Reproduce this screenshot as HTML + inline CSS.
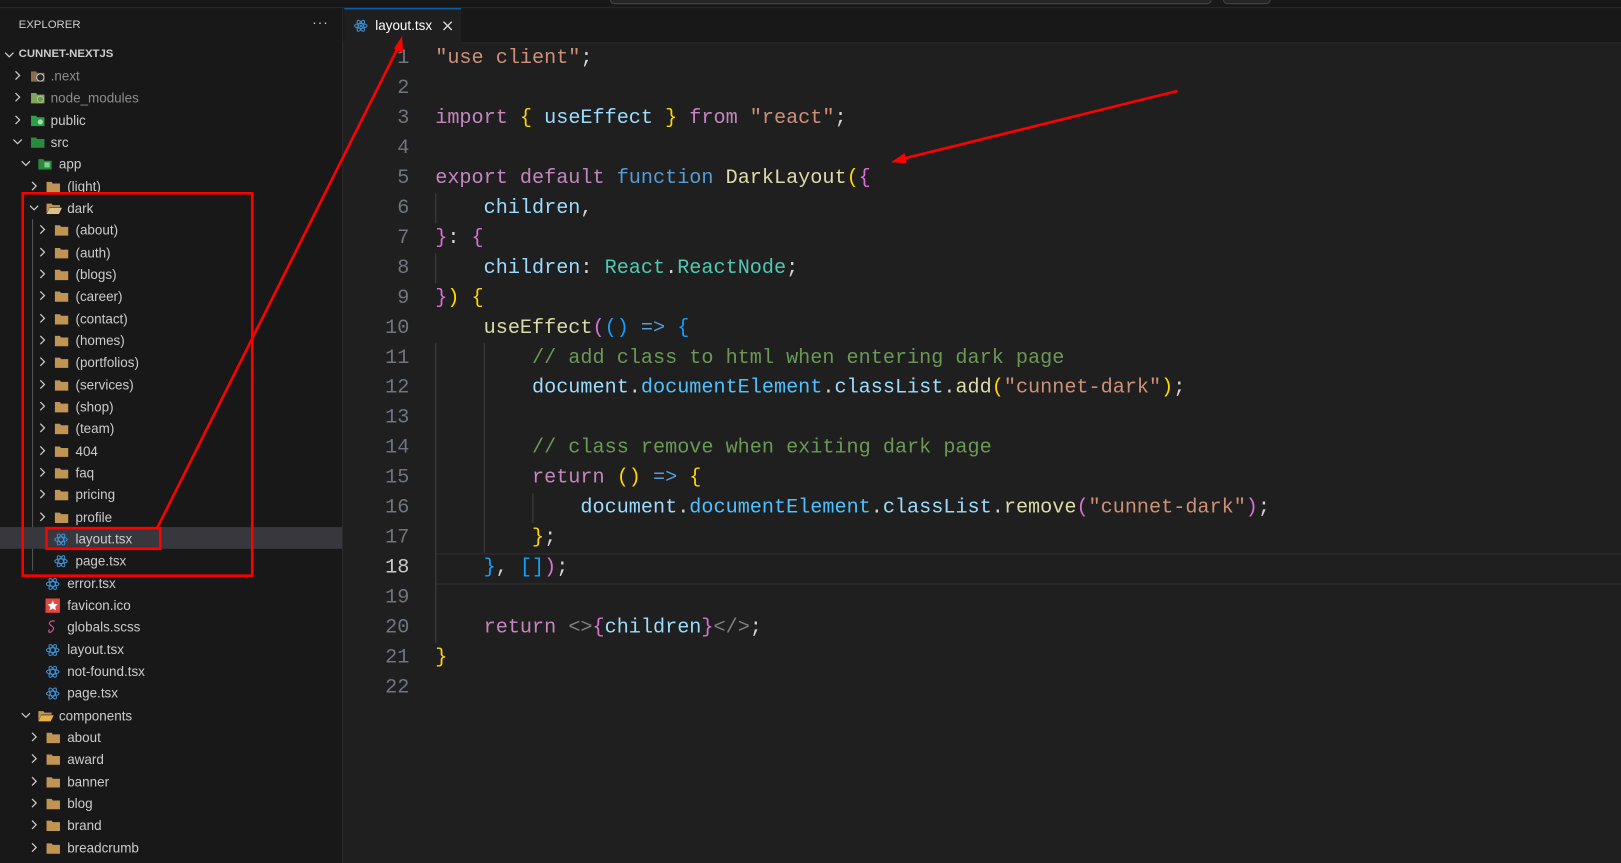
<!DOCTYPE html>
<html><head><meta charset="utf-8"><style>
html,body{margin:0;padding:0;background:#1f1f1f;overflow:hidden;width:1621px;height:863px}
#w{position:absolute;left:0;top:0;width:1568px;height:835px;transform:scale(1.03380,1.03353);transform-origin:0 0;font-family:"Liberation Sans",sans-serif;background:#1f1f1f}
#top{position:absolute;left:0;top:0;width:1568px;height:7px;background:#181818;border-bottom:1px solid #2b2b2b}
#sb{position:absolute;left:0;top:8px;width:331px;height:827px;background:#181818;border-right:1px solid #2b2b2b}
.r{position:absolute;left:0;width:331px;height:21px;line-height:21px;font-size:13px;color:#cccccc;white-space:nowrap}
.r svg{position:absolute}
.t{position:absolute;top:0}
.dim{color:#8c8c8c}
#tabs{position:absolute;left:332px;top:8px;width:1236px;height:33px;background:#181818;border-bottom:1px solid #2b2b2b}
#tab{position:absolute;left:333px;top:8px;width:113px;height:34px;background:#1f1f1f;border-top:1px solid #0078d4;box-sizing:border-box}
#code{position:absolute;left:332px;top:42px;width:1236px}
.l{position:absolute;left:0;width:1236px;height:29px;line-height:29px;font-family:"Liberation Mono",monospace;font-size:19.5px;white-space:pre}
.n{position:absolute;right:1172px;color:#6e7681;text-align:right}
.c{position:absolute;left:89px;color:#d4d4d4}
.s{color:#ce9178}.k{color:#c586c0}.b{color:#569cd6}.f{color:#dcdcaa}.v{color:#9cdcfe}.ty{color:#4ec9b0}.cm{color:#6a9955}.g{color:#ffd700}.p{color:#da70d6}.bl{color:#179fff}.cn{color:#4fc1ff}.gr{color:#808080}
.guide{position:absolute;width:1px;background:#404040}
</style></head><body><div id="w">
<div id="top"></div>
<div style="position:absolute;left:590px;top:-4px;width:580px;height:6px;border:1px solid #454545;border-radius:4px;background:#252525"></div>
<div style="position:absolute;left:1183px;top:-4px;width:44px;height:6px;border:1px solid #454545;border-radius:4px;background:#252525"></div>
<div id="sb"></div>
<div style="position:absolute;left:18px;top:18px;font-size:11px;color:#cccccc">EXPLORER</div>
<div style="position:absolute;left:302px;top:14px;font-size:13px;color:#cccccc;letter-spacing:1px">···</div>
<div class="r" style="top:41.5px;font-weight:bold;font-size:11px">
<svg style="left:4px;top:6px" width="10" height="10" viewBox="0 0 10 10"><path d="M1 3l4 4 4-4" stroke="#ccc" fill="none" stroke-width="1.2"/></svg>
<span class="t" style="left:18px">CUNNET-NEXTJS</span></div>

<!-- tree rows -->
<div id="tree">
<!-- generated rows -->
<div class="r" style="top:63px"><svg style="left:12px;top:5px" width="10" height="10" viewBox="0 0 10 10"><path d="M3 1l4 4-4 4" stroke="#ccc" fill="none" stroke-width="1.2"/></svg><svg style="left:30px;top:4px" width="15" height="13" viewBox="0 0 15 13"><path d="M0 2h5l1 1.5h7v8.5H0z" fill="#8a6d4a"/><circle cx="9" cy="8" r="3.5" fill="#222" stroke="#ddd" stroke-width=".8"/></svg><span class="t dim" style="left:49px">.next</span></div>
<div class="r" style="top:84.3px"><svg style="left:12px;top:5px" width="10" height="10" viewBox="0 0 10 10"><path d="M3 1l4 4-4 4" stroke="#ccc" fill="none" stroke-width="1.2"/></svg><svg style="left:30px;top:4px" width="15" height="13" viewBox="0 0 15 13"><path d="M0 2h5l1 1.5h7v8.5H0z" fill="#7ea65a"/><circle cx="9" cy="8" r="3" fill="#6d9a4a" stroke="#ccc" stroke-width=".6"/></svg><span class="t dim" style="left:49px">node_modules</span></div>
<div class="r" style="top:105.7px"><svg style="left:12px;top:5px" width="10" height="10" viewBox="0 0 10 10"><path d="M3 1l4 4-4 4" stroke="#ccc" fill="none" stroke-width="1.2"/></svg><svg style="left:30px;top:4px" width="15" height="13" viewBox="0 0 15 13"><path d="M0 2h5l1 1.5h7v8.5H0z" fill="#2e9e4a"/><circle cx="9" cy="8" r="2.5" fill="#9ee0a8"/></svg><span class="t" style="left:49px">public</span></div>
<div class="r" style="top:127px"><svg style="left:12px;top:5px" width="10" height="10" viewBox="0 0 10 10"><path d="M1 3l4 4 4-4" stroke="#ccc" fill="none" stroke-width="1.2"/></svg><svg style="left:30px;top:4px" width="15" height="13" viewBox="0 0 15 13"><path d="M0 2h5l1 1.5h7v8.5H0z" fill="#2a8a3e"/></svg><span class="t" style="left:49px">src</span></div>
<div class="r" style="top:148.3px"><svg style="left:20px;top:5px" width="10" height="10" viewBox="0 0 10 10"><path d="M1 3l4 4 4-4" stroke="#ccc" fill="none" stroke-width="1.2"/></svg><svg style="left:37px;top:4px" width="15" height="13" viewBox="0 0 15 13"><path d="M0 2h5l1 1.5h7v8.5H0z" fill="#2a8a3e"/><rect x="6" y="5" width="5" height="5" fill="#7fd08f"/></svg><span class="t" style="left:57px">app</span></div>
<div class="r" style="top:169.7px"><svg style="left:28px;top:5px" width="10" height="10" viewBox="0 0 10 10"><path d="M3 1l4 4-4 4" stroke="#ccc" fill="none" stroke-width="1.2"/></svg><svg style="left:45px;top:4px" width="15" height="13" viewBox="0 0 15 13"><path d="M0 2h5l1 1.5h7v8.5H0z" fill="#c09553"/></svg><span class="t" style="left:65px">(light)</span></div>
<div class="r" style="top:191px"><svg style="left:28px;top:5px" width="10" height="10" viewBox="0 0 10 10"><path d="M1 3l4 4 4-4" stroke="#ccc" fill="none" stroke-width="1.2"/></svg><svg style="left:45px;top:4px" width="15" height="13" viewBox="0 0 15 13"><path d="M0 2h5l1 1.5h7v2H3l-3 6z" fill="#c09553"/><path d="M3 6h12l-3 6H0z" fill="#e0c08a"/></svg><span class="t" style="left:65px">dark</span></div>
</div>
<div id="t3"></div>
<div class="guide" style="left:31px;top:212px;height:340px;background:#555"></div>
<div style="position:absolute;left:0;top:510px;width:331px;height:21px;background:#37373d"></div>
<div id="rows"></div>

<div id="tabs"></div><div id="tab"></div>
<svg style="position:absolute;left:342px;top:18px" width="14" height="14" viewBox="0 0 14 14"><g fill="none" stroke="#3d8fd1" stroke-width="1"><ellipse cx="7" cy="7" rx="6" ry="2.3"/><ellipse cx="7" cy="7" rx="6" ry="2.3" transform="rotate(60 7 7)"/><ellipse cx="7" cy="7" rx="6" ry="2.3" transform="rotate(120 7 7)"/></g><circle cx="7" cy="7" r="1.2" fill="#3d8fd1"/></svg>
<div style="position:absolute;left:363px;top:17px;font-size:13px;color:#ffffff">layout.tsx</div>
<svg style="position:absolute;left:428px;top:20px" width="10" height="10" viewBox="0 0 10 10"><path d="M1 1l8 8M9 1l-8 8" stroke="#ddd" stroke-width="1.3"/></svg>

<div id="code">
<div style="position:absolute;left:89px;top:493px;width:1147px;height:27px;border-top:2px solid #282828;border-bottom:2px solid #282828"></div>
<div class="guide" style="left:89px;top:145px;height:29px"></div>
<div class="guide" style="left:89px;top:203px;height:29px"></div>
<div class="guide" style="left:89px;top:290px;height:290px"></div>
<div class="guide" style="left:136px;top:290px;height:203px"></div>
<div class="guide" style="left:183px;top:435px;height:29px"></div>
<div class="l" style="top:0"><span class="n">1</span><span class="c"><span class="s">"use client"</span>;</span></div>
<div class="l" style="top:29px"><span class="n">2</span></div>
<div class="l" style="top:58px"><span class="n">3</span><span class="c"><span class="k">import</span> <span class="g">{</span> <span class="v">useEffect</span> <span class="g">}</span> <span class="k">from</span> <span class="s">"react"</span>;</span></div>
<div class="l" style="top:87px"><span class="n">4</span></div>
<div class="l" style="top:116px"><span class="n">5</span><span class="c"><span class="k">export</span> <span class="k">default</span> <span class="b">function</span> <span class="f">DarkLayout</span><span class="g">(</span><span class="p">{</span></span></div>
<div class="l" style="top:145px"><span class="n">6</span><span class="c">    <span class="v">children</span>,</span></div>
<div class="l" style="top:174px"><span class="n">7</span><span class="c"><span class="p">}</span>: <span class="p">{</span></span></div>
<div class="l" style="top:203px"><span class="n">8</span><span class="c">    <span class="v">children</span>: <span class="ty">React</span>.<span class="ty">ReactNode</span>;</span></div>
<div class="l" style="top:232px"><span class="n">9</span><span class="c"><span class="p">}</span><span class="g">)</span> <span class="g">{</span></span></div>
<div class="l" style="top:261px"><span class="n">10</span><span class="c">    <span class="f">useEffect</span><span class="p">(</span><span class="bl">()</span> <span class="b">=&gt;</span> <span class="bl">{</span></span></div>
<div class="l" style="top:290px"><span class="n">11</span><span class="c">        <span class="cm">// add class to html when entering dark page</span></span></div>
<div class="l" style="top:319px"><span class="n">12</span><span class="c">        <span class="v">document</span>.<span class="cn">documentElement</span>.<span class="v">classList</span>.<span class="f">add</span><span class="g">(</span><span class="s">"cunnet-dark"</span><span class="g">)</span>;</span></div>
<div class="l" style="top:348px"><span class="n">13</span></div>
<div class="l" style="top:377px"><span class="n">14</span><span class="c">        <span class="cm">// class remove when exiting dark page</span></span></div>
<div class="l" style="top:406px"><span class="n">15</span><span class="c">        <span class="k">return</span> <span class="g">()</span> <span class="b">=&gt;</span> <span class="g">{</span></span></div>
<div class="l" style="top:435px"><span class="n">16</span><span class="c">            <span class="v">document</span>.<span class="cn">documentElement</span>.<span class="v">classList</span>.<span class="f">remove</span><span class="p">(</span><span class="s">"cunnet-dark"</span><span class="p">)</span>;</span></div>
<div class="l" style="top:464px"><span class="n">17</span><span class="c">        <span class="g">}</span>;</span></div>
<div class="l" style="top:493px"><span class="n" style="color:#cccccc">18</span><span class="c">    <span class="bl">}</span>, <span class="bl">[]</span><span class="p">)</span>;</span></div>
<div class="l" style="top:522px"><span class="n">19</span></div>
<div class="l" style="top:551px"><span class="n">20</span><span class="c">    <span class="k">return</span> <span class="gr">&lt;&gt;</span><span class="p">{</span><span class="v">children</span><span class="p">}</span><span class="gr">&lt;/&gt;</span>;</span></div>
<div class="l" style="top:580px"><span class="n">21</span><span class="c"><span class="g">}</span></span></div>
<div class="l" style="top:609px"><span class="n">22</span></div>
</div>

<!-- remaining tree rows -->
<div class="r" style="top:212.3px"><svg style="left:36px;top:5px" width="10" height="10" viewBox="0 0 10 10"><path d="M3 1l4 4-4 4" stroke="#ccc" fill="none" stroke-width="1.2"/></svg><svg style="left:53px;top:4px" width="15" height="13" viewBox="0 0 15 13"><path d="M0 2h5l1 1.5h7v8.5H0z" fill="#c09553"/></svg><span class="t" style="left:73px">(about)</span></div>
<div class="r" style="top:233.7px"><svg style="left:36px;top:5px" width="10" height="10" viewBox="0 0 10 10"><path d="M3 1l4 4-4 4" stroke="#ccc" fill="none" stroke-width="1.2"/></svg><svg style="left:53px;top:4px" width="15" height="13" viewBox="0 0 15 13"><path d="M0 2h5l1 1.5h7v8.5H0z" fill="#c09553"/></svg><span class="t" style="left:73px">(auth)</span></div>
<div class="r" style="top:255px"><svg style="left:36px;top:5px" width="10" height="10" viewBox="0 0 10 10"><path d="M3 1l4 4-4 4" stroke="#ccc" fill="none" stroke-width="1.2"/></svg><svg style="left:53px;top:4px" width="15" height="13" viewBox="0 0 15 13"><path d="M0 2h5l1 1.5h7v8.5H0z" fill="#c09553"/></svg><span class="t" style="left:73px">(blogs)</span></div>
<div class="r" style="top:276.3px"><svg style="left:36px;top:5px" width="10" height="10" viewBox="0 0 10 10"><path d="M3 1l4 4-4 4" stroke="#ccc" fill="none" stroke-width="1.2"/></svg><svg style="left:53px;top:4px" width="15" height="13" viewBox="0 0 15 13"><path d="M0 2h5l1 1.5h7v8.5H0z" fill="#c09553"/></svg><span class="t" style="left:73px">(career)</span></div>
<div class="r" style="top:297.7px"><svg style="left:36px;top:5px" width="10" height="10" viewBox="0 0 10 10"><path d="M3 1l4 4-4 4" stroke="#ccc" fill="none" stroke-width="1.2"/></svg><svg style="left:53px;top:4px" width="15" height="13" viewBox="0 0 15 13"><path d="M0 2h5l1 1.5h7v8.5H0z" fill="#c09553"/></svg><span class="t" style="left:73px">(contact)</span></div>
<div class="r" style="top:319px"><svg style="left:36px;top:5px" width="10" height="10" viewBox="0 0 10 10"><path d="M3 1l4 4-4 4" stroke="#ccc" fill="none" stroke-width="1.2"/></svg><svg style="left:53px;top:4px" width="15" height="13" viewBox="0 0 15 13"><path d="M0 2h5l1 1.5h7v8.5H0z" fill="#c09553"/></svg><span class="t" style="left:73px">(homes)</span></div>
<div class="r" style="top:340.3px"><svg style="left:36px;top:5px" width="10" height="10" viewBox="0 0 10 10"><path d="M3 1l4 4-4 4" stroke="#ccc" fill="none" stroke-width="1.2"/></svg><svg style="left:53px;top:4px" width="15" height="13" viewBox="0 0 15 13"><path d="M0 2h5l1 1.5h7v8.5H0z" fill="#c09553"/></svg><span class="t" style="left:73px">(portfolios)</span></div>
<div class="r" style="top:361.7px"><svg style="left:36px;top:5px" width="10" height="10" viewBox="0 0 10 10"><path d="M3 1l4 4-4 4" stroke="#ccc" fill="none" stroke-width="1.2"/></svg><svg style="left:53px;top:4px" width="15" height="13" viewBox="0 0 15 13"><path d="M0 2h5l1 1.5h7v8.5H0z" fill="#c09553"/></svg><span class="t" style="left:73px">(services)</span></div>
<div class="r" style="top:383px"><svg style="left:36px;top:5px" width="10" height="10" viewBox="0 0 10 10"><path d="M3 1l4 4-4 4" stroke="#ccc" fill="none" stroke-width="1.2"/></svg><svg style="left:53px;top:4px" width="15" height="13" viewBox="0 0 15 13"><path d="M0 2h5l1 1.5h7v8.5H0z" fill="#c09553"/></svg><span class="t" style="left:73px">(shop)</span></div>
<div class="r" style="top:404.3px"><svg style="left:36px;top:5px" width="10" height="10" viewBox="0 0 10 10"><path d="M3 1l4 4-4 4" stroke="#ccc" fill="none" stroke-width="1.2"/></svg><svg style="left:53px;top:4px" width="15" height="13" viewBox="0 0 15 13"><path d="M0 2h5l1 1.5h7v8.5H0z" fill="#c09553"/></svg><span class="t" style="left:73px">(team)</span></div>
<div class="r" style="top:425.7px"><svg style="left:36px;top:5px" width="10" height="10" viewBox="0 0 10 10"><path d="M3 1l4 4-4 4" stroke="#ccc" fill="none" stroke-width="1.2"/></svg><svg style="left:53px;top:4px" width="15" height="13" viewBox="0 0 15 13"><path d="M0 2h5l1 1.5h7v8.5H0z" fill="#c09553"/></svg><span class="t" style="left:73px">404</span></div>
<div class="r" style="top:447px"><svg style="left:36px;top:5px" width="10" height="10" viewBox="0 0 10 10"><path d="M3 1l4 4-4 4" stroke="#ccc" fill="none" stroke-width="1.2"/></svg><svg style="left:53px;top:4px" width="15" height="13" viewBox="0 0 15 13"><path d="M0 2h5l1 1.5h7v8.5H0z" fill="#c09553"/></svg><span class="t" style="left:73px">faq</span></div>
<div class="r" style="top:468.3px"><svg style="left:36px;top:5px" width="10" height="10" viewBox="0 0 10 10"><path d="M3 1l4 4-4 4" stroke="#ccc" fill="none" stroke-width="1.2"/></svg><svg style="left:53px;top:4px" width="15" height="13" viewBox="0 0 15 13"><path d="M0 2h5l1 1.5h7v8.5H0z" fill="#c09553"/></svg><span class="t" style="left:73px">pricing</span></div>
<div class="r" style="top:489.7px"><svg style="left:36px;top:5px" width="10" height="10" viewBox="0 0 10 10"><path d="M3 1l4 4-4 4" stroke="#ccc" fill="none" stroke-width="1.2"/></svg><svg style="left:53px;top:4px" width="15" height="13" viewBox="0 0 15 13"><path d="M0 2h5l1 1.5h7v8.5H0z" fill="#c09553"/></svg><span class="t" style="left:73px">profile</span></div>
<div class="r" style="top:511px"><svg style="left:52px;top:4px" width="14" height="14" viewBox="0 0 14 14"><g fill="none" stroke="#3d8fd1"><ellipse cx="7" cy="7" rx="6" ry="2.3"/><ellipse cx="7" cy="7" rx="6" ry="2.3" transform="rotate(60 7 7)"/><ellipse cx="7" cy="7" rx="6" ry="2.3" transform="rotate(120 7 7)"/></g></svg><span class="t" style="left:73px">layout.tsx</span></div>
<div class="r" style="top:532.3px"><svg style="left:52px;top:4px" width="14" height="14" viewBox="0 0 14 14"><g fill="none" stroke="#3d8fd1"><ellipse cx="7" cy="7" rx="6" ry="2.3"/><ellipse cx="7" cy="7" rx="6" ry="2.3" transform="rotate(60 7 7)"/><ellipse cx="7" cy="7" rx="6" ry="2.3" transform="rotate(120 7 7)"/></g></svg><span class="t" style="left:73px">page.tsx</span></div>
<div class="r" style="top:553.7px"><svg style="left:44px;top:4px" width="14" height="14" viewBox="0 0 14 14"><g fill="none" stroke="#3d8fd1"><ellipse cx="7" cy="7" rx="6" ry="2.3"/><ellipse cx="7" cy="7" rx="6" ry="2.3" transform="rotate(60 7 7)"/><ellipse cx="7" cy="7" rx="6" ry="2.3" transform="rotate(120 7 7)"/></g></svg><span class="t" style="left:65px">error.tsx</span></div>
<div class="r" style="top:575px"><svg style="left:44px;top:4px" width="14" height="14" viewBox="0 0 14 14"><rect width="14" height="14" fill="#e8453c"/><path d="M7 2l1.5 3.3 3.5.4-2.6 2.4.7 3.5L7 9.8 3.9 11.6l.7-3.5L2 5.7l3.5-.4z" fill="#fff"/></svg><span class="t" style="left:65px">favicon.ico</span></div>
<div class="r" style="top:596.3px"><svg style="left:44px;top:3px" width="14" height="15" viewBox="0 0 14 15"><path d="M9 2C5 1 2 4 5 6s4 3 1 6c-2 2-4 0-2-2" fill="none" stroke="#c6538c" stroke-width="1.2"/></svg><span class="t" style="left:65px">globals.scss</span></div>
<div class="r" style="top:617.7px"><svg style="left:44px;top:4px" width="14" height="14" viewBox="0 0 14 14"><g fill="none" stroke="#3d8fd1"><ellipse cx="7" cy="7" rx="6" ry="2.3"/><ellipse cx="7" cy="7" rx="6" ry="2.3" transform="rotate(60 7 7)"/><ellipse cx="7" cy="7" rx="6" ry="2.3" transform="rotate(120 7 7)"/></g></svg><span class="t" style="left:65px">layout.tsx</span></div>
<div class="r" style="top:639px"><svg style="left:44px;top:4px" width="14" height="14" viewBox="0 0 14 14"><g fill="none" stroke="#3d8fd1"><ellipse cx="7" cy="7" rx="6" ry="2.3"/><ellipse cx="7" cy="7" rx="6" ry="2.3" transform="rotate(60 7 7)"/><ellipse cx="7" cy="7" rx="6" ry="2.3" transform="rotate(120 7 7)"/></g></svg><span class="t" style="left:65px">not-found.tsx</span></div>
<div class="r" style="top:660.3px"><svg style="left:44px;top:4px" width="14" height="14" viewBox="0 0 14 14"><g fill="none" stroke="#3d8fd1"><ellipse cx="7" cy="7" rx="6" ry="2.3"/><ellipse cx="7" cy="7" rx="6" ry="2.3" transform="rotate(60 7 7)"/><ellipse cx="7" cy="7" rx="6" ry="2.3" transform="rotate(120 7 7)"/></g></svg><span class="t" style="left:65px">page.tsx</span></div>
<div class="r" style="top:681.7px"><svg style="left:20px;top:5px" width="10" height="10" viewBox="0 0 10 10"><path d="M1 3l4 4 4-4" stroke="#ccc" fill="none" stroke-width="1.2"/></svg><svg style="left:37px;top:4px" width="15" height="13" viewBox="0 0 15 13"><path d="M0 2h5l1 1.5h7v2H3l-3 6z" fill="#c09553"/><path d="M3 6h12l-3 6H0z" fill="#e8b04a"/></svg><span class="t" style="left:57px">components</span></div>
<div class="r" style="top:703px"><svg style="left:28px;top:5px" width="10" height="10" viewBox="0 0 10 10"><path d="M3 1l4 4-4 4" stroke="#ccc" fill="none" stroke-width="1.2"/></svg><svg style="left:45px;top:4px" width="15" height="13" viewBox="0 0 15 13"><path d="M0 2h5l1 1.5h7v8.5H0z" fill="#c09553"/></svg><span class="t" style="left:65px">about</span></div>
<div class="r" style="top:724.3px"><svg style="left:28px;top:5px" width="10" height="10" viewBox="0 0 10 10"><path d="M3 1l4 4-4 4" stroke="#ccc" fill="none" stroke-width="1.2"/></svg><svg style="left:45px;top:4px" width="15" height="13" viewBox="0 0 15 13"><path d="M0 2h5l1 1.5h7v8.5H0z" fill="#c09553"/></svg><span class="t" style="left:65px">award</span></div>
<div class="r" style="top:745.7px"><svg style="left:28px;top:5px" width="10" height="10" viewBox="0 0 10 10"><path d="M3 1l4 4-4 4" stroke="#ccc" fill="none" stroke-width="1.2"/></svg><svg style="left:45px;top:4px" width="15" height="13" viewBox="0 0 15 13"><path d="M0 2h5l1 1.5h7v8.5H0z" fill="#c09553"/></svg><span class="t" style="left:65px">banner</span></div>
<div class="r" style="top:767px"><svg style="left:28px;top:5px" width="10" height="10" viewBox="0 0 10 10"><path d="M3 1l4 4-4 4" stroke="#ccc" fill="none" stroke-width="1.2"/></svg><svg style="left:45px;top:4px" width="15" height="13" viewBox="0 0 15 13"><path d="M0 2h5l1 1.5h7v8.5H0z" fill="#c09553"/></svg><span class="t" style="left:65px">blog</span></div>
<div class="r" style="top:788.3px"><svg style="left:28px;top:5px" width="10" height="10" viewBox="0 0 10 10"><path d="M3 1l4 4-4 4" stroke="#ccc" fill="none" stroke-width="1.2"/></svg><svg style="left:45px;top:4px" width="15" height="13" viewBox="0 0 15 13"><path d="M0 2h5l1 1.5h7v8.5H0z" fill="#c09553"/></svg><span class="t" style="left:65px">brand</span></div>
<div class="r" style="top:809.7px"><svg style="left:28px;top:5px" width="10" height="10" viewBox="0 0 10 10"><path d="M3 1l4 4-4 4" stroke="#ccc" fill="none" stroke-width="1.2"/></svg><svg style="left:45px;top:4px" width="15" height="13" viewBox="0 0 15 13"><path d="M0 2h5l1 1.5h7v8.5H0z" fill="#c09553"/></svg><span class="t" style="left:65px">breadcrumb</span></div>

<!-- annotations -->
<svg style="position:absolute;left:0;top:0" width="1568" height="835" viewBox="0 0 1568 835">
<rect x="22" y="187" width="222" height="370" fill="none" stroke="#ff0000" stroke-width="2.5"/>
<rect x="45" y="511" width="110" height="20" fill="none" stroke="#ff0000" stroke-width="2.5"/>
<line x1="152" y1="511" x2="386" y2="44" stroke="#ff0000" stroke-width="2.5"/>
<path d="M389 35l1 16-9-4z" fill="#ff0000"/>
<line x1="1139" y1="88" x2="872" y2="154" stroke="#ff0000" stroke-width="2.5"/>
<path d="M862 157l13-9 2 10z" fill="#ff0000"/>
</svg>
</div></body></html>
